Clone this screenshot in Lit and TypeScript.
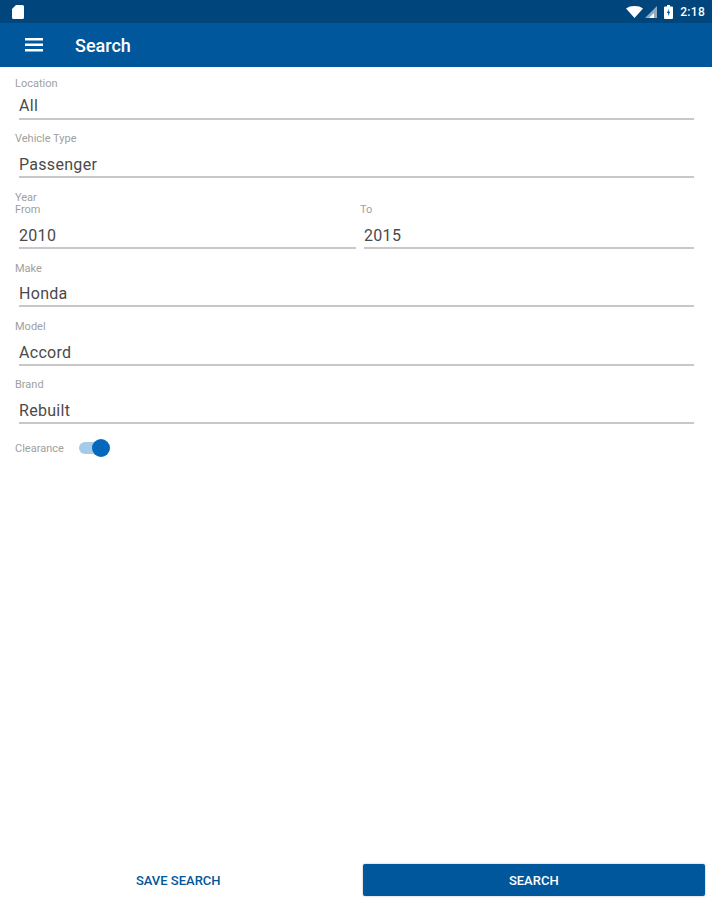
import { LitElement, html, css } from 'lit'
import { customElement } from 'lit/decorators.js'

@customElement('search-field')
export class SearchField extends LitElement {
  static properties = {
    label: { type: String },
    value: { type: String },
  }
  label = ''
  value = ''

  render() {
    return html`
      <div class="label">${this.label}</div>
      <div class="value">${this.value}</div>
    `
  }

  static styles = css`
    :host {
      display: block;
    }
    .label {
      margin-top: var(--label-shift, 0.25px);
      font-size: 11px;
      line-height: 12px;
      color: #a0a0a0;
    }
    .value {
      margin: var(--value-gap, 5.75px) 3px 0 4px;
      height: var(--value-height, 28px);
      box-sizing: border-box;
      padding-top: var(--value-pad, 3px);
      font-size: 16px;
      line-height: 24px;
      letter-spacing: 0.3px;
      color: #4a4a4a;
      border-bottom: 2px solid #c8c8c8;
    }
  `
}

@customElement('app-root')
export class AppRoot extends LitElement {
  render() {
    return html`
      <div class="status">
        <svg class="sd" width="12" height="14" viewBox="0 0 12 14">
          <path d="M4 0h6.500A1.500 1.500 0 0 1 12 1.500v11a1.500 1.500 0 0 1-1.500 1.500h-9A1.500 1.500 0 0 1 0 12.500V4z" fill="#fff" />
        </svg>
        <span class="grow"></span>
        <svg width="17" height="12" viewBox="0 0 17 12">
          <path d="M0 2.500C2.200.8 5.200 0 8.500 0s6.300.8 8.500 2.500L8.500 12z" fill="#fff" />
        </svg>
        <svg class="signal" width="12" height="12" viewBox="0 0 12 12">
          <path d="M0 12L12 0v12z" fill="#8fa9c0" />
          <path d="M4 12l5-5v5z" fill="#fff" />
        </svg>
        <svg class="battery" width="9" height="14" viewBox="0 0 9 14">
          <path d="M3 0h3v1.500h2a1 1 0 0 1 1 1V13a1 1 0 0 1-1 1H1a1 1 0 0 1-1-1V2.500a1 1 0 0 1 1-1h2z" fill="#fff" />
          <path d="M5 4L2.800 8H4.200L4 11 6.300 6.800H4.800z" fill="#01579b" />
        </svg>
        <span class="time">2:18</span>
      </div>
      <header class="toolbar">
        <svg width="18" height="14" viewBox="0 0 18 14">
          <path d="M0 0h18v2.500H0zM0 5.500h18V8H0zM0 11h18v2.500H0z" fill="#fff" />
        </svg>
        <span class="title">Search</span>
      </header>
      <main class="form">
        <search-field class="first" label="Location" value="All"></search-field>
        <search-field label="Vehicle Type" value="Passenger"></search-field>
        <div class="year">
          <div class="year-label">Year</div>
          <div class="range">
            <search-field class="from low" label="From" value="2010"></search-field>
            <search-field class="low" label="To" value="2015"></search-field>
          </div>
        </div>
        <search-field class="low" label="Make" value="Honda"></search-field>
        <search-field class="low" label="Model" value="Accord"></search-field>
        <search-field label="Brand" value="Rebuilt"></search-field>
        <div class="clearance">
          <span class="clearance-label">Clearance</span>
          <div class="switch"><div class="knob"></div></div>
        </div>
      </main>
      <footer class="actions">
        <button class="save">SAVE SEARCH</button>
        <button class="go">SEARCH</button>
      </footer>
    `
  }

  static styles = css`
    :host {
      display: flex;
      flex-direction: column;
      height: 900px;
      background: #fff;
      font-family: Roboto, 'Liberation Sans', sans-serif;
    }
    .status {
      height: 23px;
      background: #00457b;
      display: flex;
      align-items: center;
      padding: 0 7px 0 12px;
      box-sizing: border-box;
      flex: none;
    }
    .grow {
      flex: 1;
    }
    .signal {
      margin-left: 2px;
    }
    .battery {
      margin-left: 7px;
    }
    .time {
      margin-left: 7px;
      font-size: 12px;
      font-weight: 500;
      letter-spacing: 0.3px;
      color: #fff;
    }
    .toolbar {
      height: 44px;
      background: #01579b;
      display: flex;
      align-items: center;
      padding-left: 25px;
      flex: none;
      box-sizing: border-box;
    }
    .title {
      margin-left: 32px;
      font-size: 18px;
      font-weight: 500;
      color: #fff;
    }
    .form {
      flex: 1;
      padding: 10.75px 15px 0;
      display: flex;
      flex-direction: column;
      gap: 12.5px;
    }
    .first {
      --label-shift: 0px;
      --value-gap: 3px;
      --value-height: 27px;
      --value-pad: 1px;
    }
    .low {
      --label-shift: 1.25px;
      --value-gap: 4.75px;
    }
    .year-label {
      height: 12px;
      box-sizing: border-box;
      padding-top: 1px;
      font-size: 11px;
      line-height: 12px;
      color: #a0a0a0;
    }
    .range {
      display: grid;
      grid-template-columns: 345px 1fr;
    }
    .from {
      margin-right: 1px;
    }
    .clearance {
      display: flex;
      align-items: center;
      gap: 15px;
      font-size: 11px;
      color: #a0a0a0;
      margin-top: 1px;
      height: 20px;
    }
    .clearance-label {
      margin-top: 2px;
    }
    .switch {
      position: relative;
      width: 28px;
      height: 12px;
      border-radius: 6px;
      background: #a5cbe8;
    }
    .knob {
      position: absolute;
      right: -3px;
      top: -3px;
      width: 18px;
      height: 18px;
      border-radius: 50%;
      background: #0468bd;
    }
    .actions {
      display: flex;
      gap: 13px;
      padding: 0 7px 4px;
      flex: none;
    }
    button {
      flex: 1;
      height: 32px;
      border: none;
      border-radius: 2px;
      font-family: inherit;
      font-size: 13px;
      font-weight: 500;
      padding: 0;
    }
    .save {
      background: none;
      color: #01579b;
    }
    .go {
      background: #01579b;
      color: #fff;
      box-shadow: 0 0 2px rgba(0, 0, 0, 0.35);
    }
  `
}
